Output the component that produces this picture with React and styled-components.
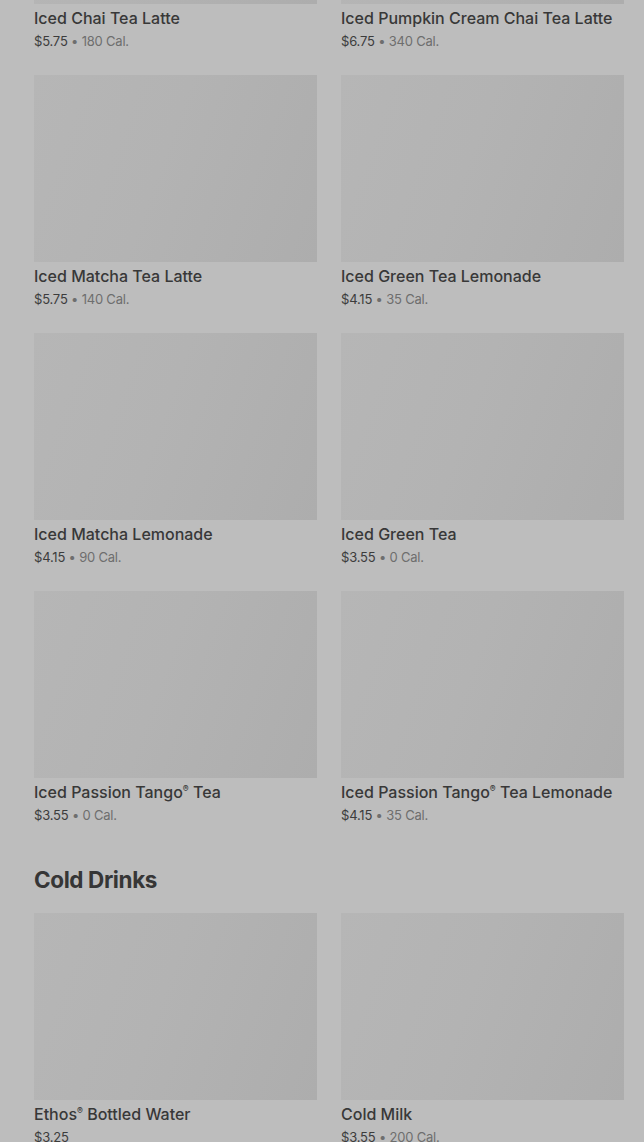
import React from "react";
import styled, { createGlobalStyle } from "styled-components";

const GlobalStyle = createGlobalStyle`
  html, body {
    margin: 0;
    padding: 0;
    background: #bdbdbd;
    font-family: Inter, "Noto Sans", "Liberation Sans", sans-serif;
    overflow: hidden;
  }
`;

const Page = styled.div`
  height: 1142px;
  overflow: hidden;
  background: #bdbdbd;
`;

// content is scrolled, first row image is mostly off the top
const Scroller = styled.div`
  margin-top: -183px;
  padding: 0 20px 0 34px;
`;

const Section = styled.section`
  display: flex;
  flex-direction: column;
`;

const Heading = styled.h2`
  margin: 41px 0 18px;
  font-size: 22.5px;
  line-height: 30px;
  font-weight: 700;
  letter-spacing: -0.4px;
  color: #363636;
`;

const Grid = styled.div`
  display: grid;
  grid-template-columns: 283px 283px;
  column-gap: 24px;
  row-gap: 25px;
`;

const Card = styled.div`
  display: flex;
  flex-direction: column;
`;

const Thumb = styled.div`
  height: 187px;
  background: linear-gradient(110deg, #b6b6b6 0%, #b3b3b3 45%, #adadad 100%);
`;

const Title = styled.div`
  margin-top: 4px;
  font-size: 16px;
  line-height: 20px;
  font-weight: 500;
  color: #383838;
  white-space: nowrap;
`;

const Reg = styled.sup`
  font-size: 0.55em;
  line-height: 0;
  vertical-align: 0.7em;
`;

const Meta = styled.div`
  margin-top: 4px;
  font-size: 13px;
  line-height: 18px;
  color: #3c3c3c;
  letter-spacing: -0.2px;
`;

const Cal = styled.span`
  color: #6e6e6e;
`;

const teas = [
  { name: "Iced Chai Tea Latte", price: "$5.75", cal: "180 Cal." },
  { name: "Iced Pumpkin Cream Chai Tea Latte", price: "$6.75", cal: "340 Cal." },
  { name: "Iced Matcha Tea Latte", price: "$5.75", cal: "140 Cal." },
  { name: "Iced Green Tea Lemonade", price: "$4.15", cal: "35 Cal." },
  { name: "Iced Matcha Lemonade", price: "$4.15", cal: "90 Cal." },
  { name: "Iced Green Tea", price: "$3.55", cal: "0 Cal." },
  { name: "Iced Passion Tango® Tea", price: "$3.55", cal: "0 Cal." },
  { name: "Iced Passion Tango® Tea Lemonade", price: "$4.15", cal: "35 Cal." },
];

const coldDrinks = [
  { name: "Ethos® Bottled Water", price: "$3.25" },
  { name: "Cold Milk", price: "$3.55", cal: "200 Cal." },
];

const renderName = (name) =>
  name.split("®").map((part, i, arr) => (
    <React.Fragment key={i}>
      {part}
      {i < arr.length - 1 && <Reg>®</Reg>}
    </React.Fragment>
  ));

const Item = ({ item }) => (
  <Card>
    <Thumb />
    <Title>{renderName(item.name)}</Title>
    <Meta>
      {item.price}
      {item.cal && <Cal> • {item.cal}</Cal>}
    </Meta>
  </Card>
);

const App = () => (
  <Page>
    <GlobalStyle />
    <Scroller>
      <Section>
        <Grid>
          {teas.map((t) => (
            <Item key={t.name} item={t} />
          ))}
        </Grid>
      </Section>
      <Section>
        <Heading>Cold Drinks</Heading>
        <Grid>
          {coldDrinks.map((t) => (
            <Item key={t.name} item={t} />
          ))}
        </Grid>
      </Section>
    </Scroller>
  </Page>
);

export default App;
